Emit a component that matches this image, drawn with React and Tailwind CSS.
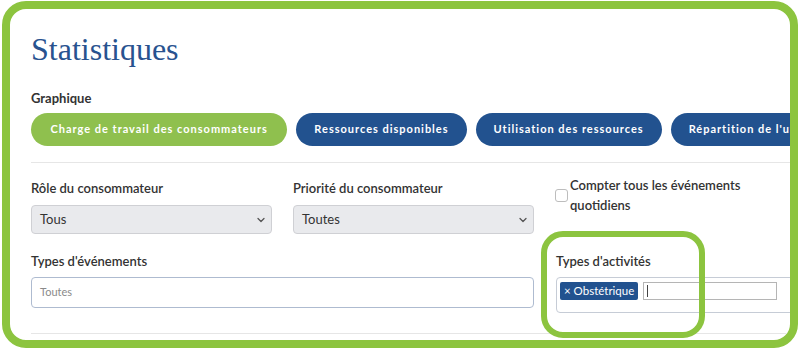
import React from "react";

const Chevron = () => (
  <svg width="8" height="6" viewBox="0 0 8 6" className="shrink-0">
    <path d="M1 1.5 L4 4.5 L7 1.5" fill="none" stroke="#555" strokeWidth="1.3" strokeLinecap="round" strokeLinejoin="round" />
  </svg>
);

export default function App() {
  const buttons = [
    { label: "Charge de travail des consommateurs", active: true },
    { label: "Ressources disponibles" },
    { label: "Utilisation des ressources" },
    { label: "Répartition de l'utilisation" },
  ];
  return (
    <div
      className="relative w-[800px] h-[350px] bg-white pt-[1px] pl-[2px]"
      style={{ fontFamily: "Lato, 'Open Sans', sans-serif" }}
    >
      <div className="w-[796px] h-[347px] border-[8px] border-[#8cc43f] rounded-[24px] overflow-hidden bg-white">
        <div className="w-[800px] pl-[21px] pt-[21px]">
          <h1
            className="text-[32px] leading-[38px] text-[#28528f]"
            style={{ fontFamily: "'Liberation Serif', 'Times New Roman', serif" }}
          >
            Statistiques
          </h1>
          <div className="mt-[20px] text-[13px] leading-[20px] font-bold text-[#333]">Graphique</div>
          <div className="mt-[5px] flex gap-[9px] whitespace-nowrap">
            {buttons.map((b) => (
              <div
                key={b.label}
                className={`h-[33px] shrink-0 rounded-full flex items-center text-[11px] font-bold tracking-[0.09em] text-white ${
                  b.active ? "bg-[#8fc04e] px-[19.5px]" : "bg-[#22528f] px-[18px]"
                }`}
              >
                {b.label}
              </div>
            ))}
          </div>
          <div className="mt-[16px] h-px bg-[#e6e6e6]" />

          <div className="mt-[15px] grid grid-cols-[241px_241px_241px] gap-x-[21px]">
            <div>
              <div className="text-[13px] leading-[20px] font-semibold text-[#333]">Rôle du consommateur</div>
              <div className="mt-[7px] h-[29px] rounded-[4px] border border-[#cfd0d4] bg-[#e9eaed] flex items-center justify-between pl-[8px] pr-[6px] text-[13px] text-[#333]">
                <span>Tous</span>
                <Chevron />
              </div>
            </div>
            <div>
              <div className="text-[13px] leading-[20px] font-semibold text-[#333]">Priorité du consommateur</div>
              <div className="mt-[7px] h-[29px] rounded-[4px] border border-[#cfd0d4] bg-[#e9eaed] flex items-center justify-between pl-[8px] pr-[6px] text-[13px] text-[#333]">
                <span>Toutes</span>
                <Chevron />
              </div>
            </div>
            <div className="-mt-[3px] flex items-center gap-[2px] self-start">
              <div className="w-[13px] h-[13px] rounded-[3px] border border-[#bdbdbd] bg-white shrink-0" />
              <div className="text-[13px] leading-[20px] font-semibold text-[#333]">
                Compter tous les événements
                <br />
                quotidiens
              </div>
            </div>
          </div>

          <div className="mt-[17px] grid grid-cols-[241px_241px_241px] gap-x-[21px]">
            <div className="col-span-2">
              <div className="text-[13px] leading-[20px] font-semibold text-[#333]">Types d'événements</div>
              <div className="mt-[6px] h-[31px] rounded-[4px] border border-[#aebbd0] bg-white flex items-center pl-[8px] text-[11px] text-[#8a8a8a]">
                Toutes
              </div>
            </div>
            <div className="pl-[1px]">
              <div className="text-[13px] leading-[20px] font-semibold text-[#333]">Types d'activités</div>
              <div className="mt-[6px] h-[36px] rounded-[4px] border border-[#c6ccd6] bg-white pl-[3px] pt-[4px] flex items-start gap-[5px]">
                <span className="h-[18px] px-[4px] rounded-[2px] bg-[#22528f] text-white text-[11.5px] leading-[18px] whitespace-nowrap">
                  × Obstétrique
                </span>
                <div className="h-[18px] w-[134px] border border-[#b5b5b5] bg-white flex items-center pl-[3px]">
                  <div className="w-px h-[12px] bg-[#444]" />
                </div>
              </div>
            </div>
          </div>

          <div className="mt-[20px] h-px bg-[#e6e6e6]" />
        </div>
      </div>

      <div className="absolute left-[541px] top-[231px] w-[164px] h-[107px] border-[6px] border-[#8cc43f] rounded-[22px] pointer-events-none" />
    </div>
  );
}
